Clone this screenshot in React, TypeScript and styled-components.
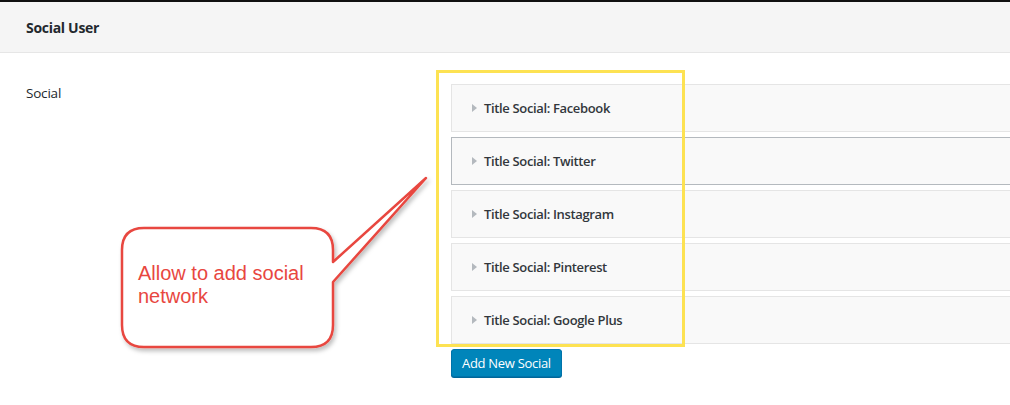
import React from "react";
import styled, { createGlobalStyle } from "styled-components";

const Global = createGlobalStyle`
  html, body { margin: 0; padding: 0; background: #fff; overflow: hidden; }
  body { font-family: "Open Sans", "Noto Sans", sans-serif; color: #23282d; }
`;

const Page = styled.div`
  position: relative;
  width: 1010px;
  height: 405px;
  border-top: 2px solid #111;
  box-sizing: border-box;
  overflow: hidden;
`;

const Header = styled.div`
  height: 50px;
  display: flex;
  align-items: center;
  padding-left: 26px;
  background: #f5f5f5;
  border-bottom: 1px solid #e6e6e6;
  font-size: 14px;
  font-weight: 700;
  letter-spacing: -0.3px;
`;

const FormRow = styled.div`
  display: grid;
  grid-template-columns: 425px 1fr;
  padding: 31px 0 0 26px;
`;

const Label = styled.div`
  font-size: 13.5px;
  line-height: 18px;
  letter-spacing: -0.2px;
`;

const Field = styled.div`
  display: flex;
  flex-direction: column;
  gap: 5px;
`;

const List = styled.div`
  display: flex;
  flex-direction: column;
  gap: 5px;
  width: 640px;
`;

const Item = styled.div<{ $active?: boolean }>`
  height: 48px;
  box-sizing: border-box;
  display: flex;
  align-items: center;
  gap: 7px;
  padding-left: 20px;
  background: #f9f9f9;
  border: 1px solid ${(p) => (p.$active ? "#b4b9be" : "#e5e5e5")};
  font-size: 13px;
  font-weight: 600;
  letter-spacing: -0.35px;
  color: #32373c;
`;

const Arrow = styled.span`
  width: 0;
  height: 0;
  border-left: 5px solid #b4b9be;
  border-top: 4px solid transparent;
  border-bottom: 4px solid transparent;
`;

const Button = styled.button`
  align-self: flex-start;
  height: 28px;
  padding: 0 10px;
  background: #0085ba;
  border: 1px solid #0073aa;
  border-radius: 3px;
  box-shadow: 0 1px 0 #006799;
  color: #fff;
  font-family: "Open Sans", "Noto Sans", sans-serif;
  font-size: 13px;
  letter-spacing: -0.3px;
  cursor: pointer;
`;

const Highlight = styled.div`
  position: absolute;
  left: 436px;
  top: 68px;
  width: 249px;
  height: 277px;
  box-sizing: border-box;
  border: 3px solid #fde252;
  pointer-events: none;
`;

const Callout = styled.div`
  position: absolute;
  left: 0;
  top: 0;
  width: 1010px;
  height: 405px;
  pointer-events: none;
`;

const CalloutShape = styled.svg`
  position: absolute;
  left: 0;
  top: 0;
`;

const CalloutText = styled.div`
  position: absolute;
  left: 138px;
  top: 260px;
  width: 190px;
  font-family: "Liberation Sans", Arial, sans-serif;
  font-size: 20px;
  line-height: 23px;
  color: #e8473f;
`;

const socials = ["Facebook", "Twitter", "Instagram", "Pinterest", "Google Plus"];

export default function App() {
  return (
    <>
      <Global />
      <Page>
        <Header>Social User</Header>
        <FormRow>
          <Label>Social</Label>
          <Field>
            <List>
              {socials.map((s, i) => (
                <Item key={s} $active={i === 1}>
                  <Arrow />
                  Title Social: {s}
                </Item>
              ))}
            </List>
            <Button>Add New Social</Button>
          </Field>
        </FormRow>
        <Highlight />
        <Callout>
          <CalloutShape width="1010" height="405" viewBox="0 0 1010 405">
            <defs>
              <filter id="sh" x="-20%" y="-20%" width="140%" height="140%">
                <feDropShadow dx="2" dy="3" stdDeviation="2" floodColor="#000" floodOpacity="0.25" />
              </filter>
            </defs>
            <path
              d="M144 226 H311 Q333 226 333 248 V260 L426 176 L333 280 V323 Q333 345 311 345 H144 Q122 345 122 323 V248 Q122 226 144 226 Z"
              fill="#fff"
              stroke="#e8473f"
              strokeWidth="2.5"
              strokeLinejoin="round"
              filter="url(#sh)"
            />
          </CalloutShape>
          <CalloutText>Allow to add social network</CalloutText>
        </Callout>
      </Page>
    </>
  );
}
